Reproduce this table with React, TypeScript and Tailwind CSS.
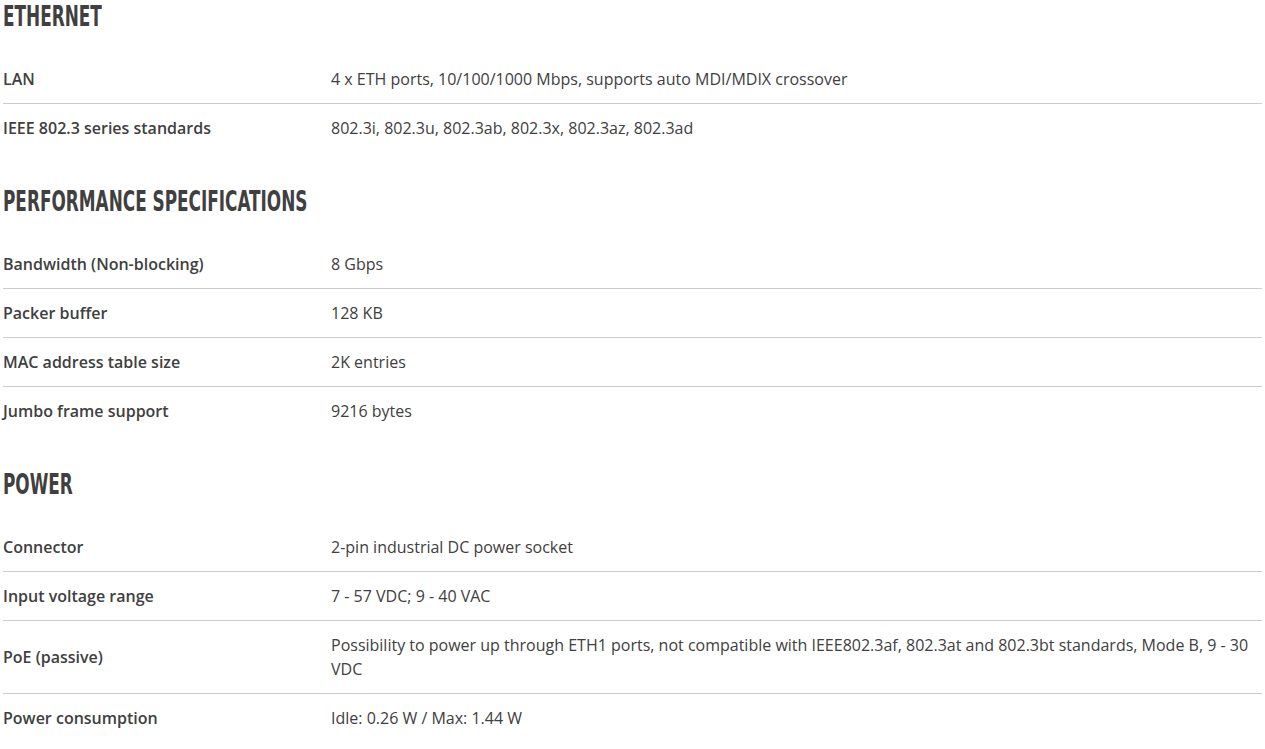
import React from 'react';

type Row = { label: string; value: string };
type Section = { title: string; rows: Row[] };

const sections: Section[] = [
  {
    title: 'ETHERNET',
    rows: [
      { label: 'LAN', value: '4 x ETH ports, 10/100/1000 Mbps, supports auto MDI/MDIX crossover' },
      { label: 'IEEE 802.3 series standards', value: '802.3i, 802.3u, 802.3ab, 802.3x, 802.3az, 802.3ad' },
    ],
  },
  {
    title: 'PERFORMANCE SPECIFICATIONS',
    rows: [
      { label: 'Bandwidth (Non-blocking)', value: '8 Gbps' },
      { label: 'Packer buffer', value: '128 KB' },
      { label: 'MAC address table size', value: '2K entries' },
      { label: 'Jumbo frame support', value: '9216 bytes' },
    ],
  },
  {
    title: 'POWER',
    rows: [
      { label: 'Connector', value: '2-pin industrial DC power socket' },
      { label: 'Input voltage range', value: '7 - 57 VDC; 9 - 40 VAC' },
      {
        label: 'PoE (passive)',
        value:
          'Possibility to power up through ETH1 ports, not compatible with IEEE802.3af, 802.3at and 802.3bt standards, Mode B, 9 - 30 VDC',
      },
      { label: 'Power consumption', value: 'Idle: 0.26 W / Max: 1.44 W' },
    ],
  },
];

const SpecSection = ({ section, first }: { section: Section; first: boolean }) => {
  return (
    <section className={first ? '' : 'mt-[33px]'}>
      <h2 className="mb-[21px] h-[34px] leading-[34px] text-[28px] font-bold text-[#404040] whitespace-nowrap [font-family:'Liberation_Sans_Narrow','DejaVu_Sans_Condensed',sans-serif]">
        <span className="inline-block origin-left scale-x-[0.67]">{section.title}</span>
      </h2>
      <div>
        {section.rows.map((row, i) => (
          <div
            key={row.label}
            className={`grid grid-cols-[328px_1fr] items-center py-3 ${
              i < section.rows.length - 1 ? 'border-b border-[#cccccc]' : ''
            }`}
          >
            <div className="font-semibold leading-6">{row.label}</div>
            <div className="leading-6">{row.value}</div>
          </div>
        ))}
      </div>
    </section>
  );
};

export default function App() {
  return (
    <div className="min-h-screen bg-white px-[3px] text-[16px] text-[#404040] [font-family:'Open_Sans',sans-serif]">
      {sections.map((s, i) => (
        <SpecSection key={s.title} section={s} first={i === 0} />
      ))}
    </div>
  );
}
